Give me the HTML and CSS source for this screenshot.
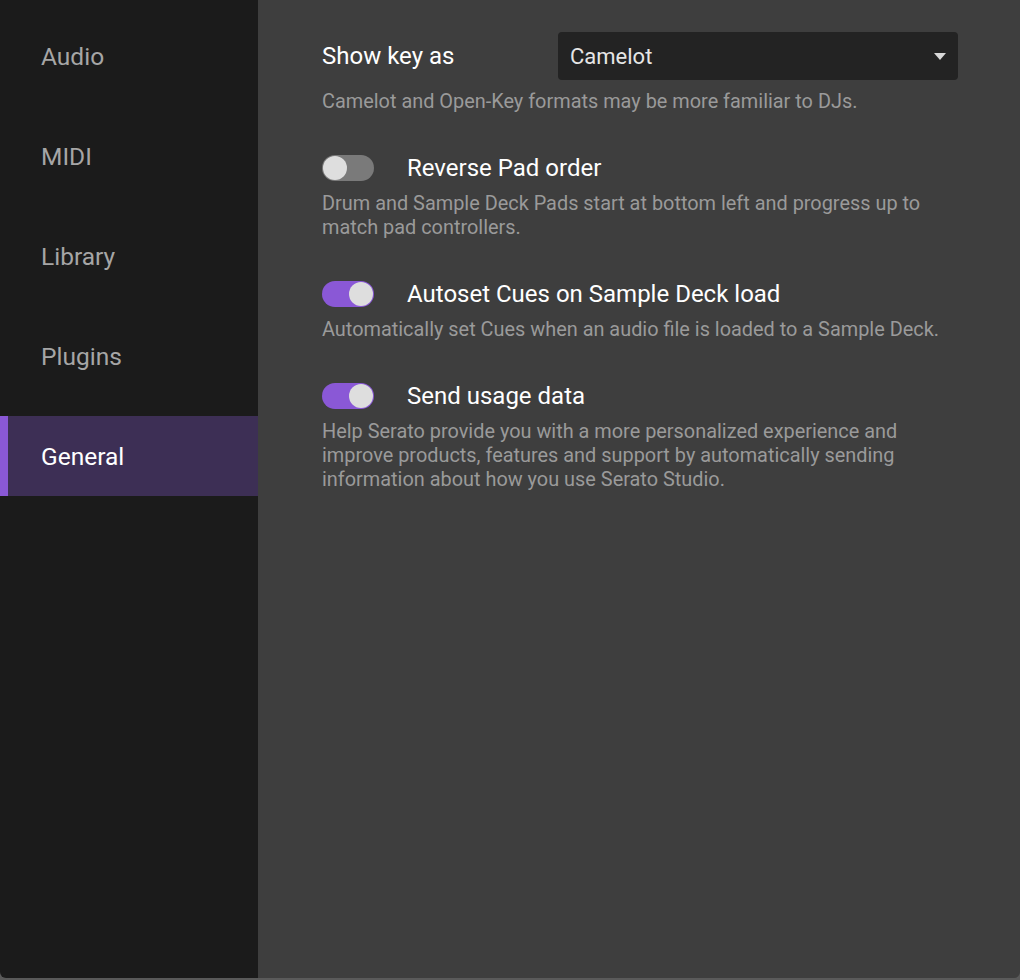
FILE: index.html
```html
<!DOCTYPE html>
<html>
<head>
<meta charset="utf-8">
<link rel="stylesheet" href="styles.css">
</head>
<body>
<div class="window">
  <nav class="sidebar">
    <div class="nav-item">Audio</div>
    <div class="nav-item">MIDI</div>
    <div class="nav-item">Library</div>
    <div class="nav-item">Plugins</div>
    <div class="nav-item active">General</div>
  </nav>
  <main class="content">
    <section class="setting first">
      <div class="row">
        <span class="label key-label">Show key as</span>
        <div class="select">
          <span>Camelot</span>
          <svg class="caret" width="12" height="7" viewBox="0 0 12 7"><path d="M0 0H12L6 7Z" fill="#d8d8d8"/></svg>
        </div>
      </div>
      <p class="desc">Camelot and Open-Key formats may be more familiar to DJs.</p>
    </section>
    <section class="setting">
      <div class="row">
        <span class="toggle"><span class="knob"></span></span>
        <span class="label toggle-label">Reverse Pad order</span>
      </div>
      <p class="desc">Drum and Sample Deck Pads start at bottom left and progress up to match pad controllers.</p>
    </section>
    <section class="setting">
      <div class="row">
        <span class="toggle on"><span class="knob"></span></span>
        <span class="label toggle-label">Autoset Cues on Sample Deck load</span>
      </div>
      <p class="desc">Automatically set Cues when an audio file is loaded to a Sample Deck.</p>
    </section>
    <section class="setting">
      <div class="row">
        <span class="toggle on"><span class="knob"></span></span>
        <span class="label toggle-label">Send usage data</span>
      </div>
      <p class="desc">Help Serato provide you with a more personalized experience and improve products, features and support by automatically sending information about how you use Serato Studio.</p>
    </section>
  </main>
</div>
</body>
</html>
```

FILE: styles.css
```css
* { box-sizing: border-box; }
html, body { margin: 0; padding: 0; height: 100%; }
body {
  background: #5a5a5a;
  font-family: Roboto, "Noto Sans", sans-serif;
}
.window {
  display: flex;
  height: 978px;
  border-radius: 0 0 6px 6px;
  overflow: hidden;
}
.sidebar {
  width: 258px;
  flex: none;
  background: #1b1b1b;
  padding-top: 16px;
  display: flex;
  flex-direction: column;
  gap: 20px;
}
.nav-item {
  height: 80px;
  display: flex;
  align-items: center;
  font-size: 24.5px;
  color: #a6a6a6;
  border-left: 8px solid transparent;
  padding-left: 33px;
}
.nav-item.active {
  background: #3d2f55;
  border-left-color: #8a58d6;
  color: #ffffff;
}
.content {
  flex: 1;
  background: #3e3e3e;
  padding: 32px 0 0 64px;
}
.setting { margin-bottom: 41px; }
.row {
  display: flex;
  align-items: center;
  min-height: 26px;
}
.label {
  font-size: 24px;
  line-height: 26px;
  color: #ffffff;
}
.key-label { width: 236px; flex: none; }
.select {
  width: 400px;
  height: 48px;
  background: #232323;
  border-radius: 4px;
  display: flex;
  align-items: center;
  justify-content: space-between;
  padding: 0 12px 0 12px;
  font-size: 22px;
  color: #e6e6e6;
}
.desc {
  margin: 11px 0 0;
  font-size: 19.9px;
  line-height: 24px;
  color: #9a9a9a;
  max-width: 636px;
}
.first .desc { margin-top: 10px; }
.toggle {
  width: 52px;
  height: 26px;
  border-radius: 13px;
  background: #7a7a7a;
  position: relative;
  flex: none;
}
.knob {
  position: absolute;
  top: 1px;
  left: 1px;
  width: 24px;
  height: 24px;
  border-radius: 50%;
  background: #dedede;
}
.toggle.on { background: #8a58d6; }
.toggle.on .knob { left: 27px; }
.toggle-label { margin-left: 33px; }
```
